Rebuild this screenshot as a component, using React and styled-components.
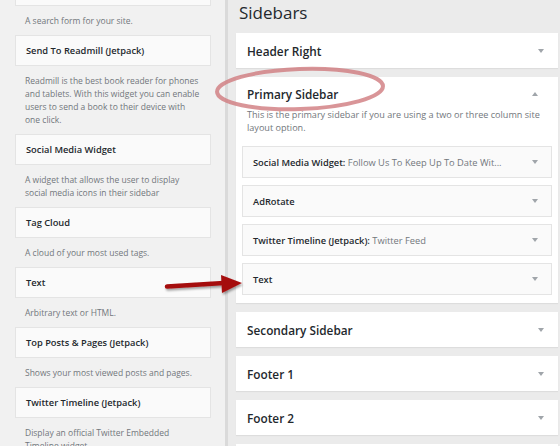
import styled, { createGlobalStyle } from "styled-components";

const GlobalStyle = createGlobalStyle`
  html, body {
    margin: 0;
    padding: 0;
  }
  body {
    font-family: "Open Sans", "Liberation Sans", sans-serif;
    background: #ebebeb;
  }
`;

const available = [
  { title: "Search", desc: "A search form for your site." },
  {
    title: "Send To Readmill (Jetpack)",
    desc: "Readmill is the best book reader for phones and tablets. With this widget you can enable users to send a book to their device with one click.",
  },
  {
    title: "Social Media Widget",
    desc: "A widget that allows the user to display social media icons in their sidebar",
  },
  { title: "Tag Cloud", desc: "A cloud of your most used tags." },
  { title: "Text", desc: "Arbitrary text or HTML." },
  { title: "Top Posts & Pages (Jetpack)", desc: "Shows your most viewed posts and pages." },
  {
    title: "Twitter Timeline (Jetpack)",
    desc: "Display an official Twitter Embedded Timeline widget.",
  },
];

const placed = [
  { title: "Social Media Widget", sub: "Follow Us To Keep Up To Date Wit..." },
  { title: "AdRotate" },
  { title: "Twitter Timeline (Jetpack)", sub: "Twitter Feed" },
  { title: "Text" },
];

const Page = styled.div`
  position: relative;
  width: 560px;
  height: 446px;
  overflow: hidden;
  display: grid;
  grid-template-columns: 228px 1fr;
`;

const Available = styled.div`
  background: #f1f1f1;
  border-right: 3px solid #dadada;
  padding: 0 14px 0 15px;
  overflow: hidden;
`;

const AvailableList = styled.div`
  margin-top: -25px;
`;

const WidgetCard = styled.div`
  height: 31px;
  box-sizing: border-box;
  background: #fafafa;
  border: 1px solid #e4e4e4;
  display: flex;
  align-items: center;
  padding: 0 10px;
  font-size: 9.3px;
  font-weight: 600;
  color: #23282d;
`;

const WidgetDesc = styled.p`
  margin: 0;
  padding: 8px 10px 8px 10px;
  font-size: 8.5px;
  line-height: 13px;
  color: #72777c;
`;

const Sidebars = styled.div`
  padding: 0 2px 0 8px;
  display: flex;
  flex-direction: column;
  gap: 9px;
`;

const Heading = styled.h1`
  margin: 0 0 -2px 3px;
  height: 26px;
  line-height: 26px;
  font-size: 17px;
  font-weight: 400;
  color: #23282d;
`;

const Area = styled.div`
  background: #fff;
  box-shadow: 0 1px 1px rgba(0, 0, 0, 0.06);
  padding: ${(p) => (p.$open ? "0 6px 8px" : "0")};
`;

const AreaHead = styled.div`
  height: ${(p) => (p.$open ? "34px" : "35px")};
  display: flex;
  align-items: center;
  justify-content: space-between;
  padding: ${(p) => (p.$open ? "0 14px 0 5px" : "0 14px 0 11px")};
  font-size: 11.8px;
  font-weight: 600;
  color: #23282d;
`;

const AreaDesc = styled.p`
  margin: -3px 0 12px 5px;
  font-size: 9.1px;
  line-height: 13px;
  color: #72777c;
`;

const PlacedList = styled.div`
  display: flex;
  flex-direction: column;
  gap: 7px;
`;

const PlacedCard = styled.div`
  height: 32px;
  box-sizing: border-box;
  background: #fafafa;
  border: 1px solid #e4e4e4;
  display: flex;
  align-items: center;
  justify-content: space-between;
  padding: 0 13px 0 10px;
  font-size: 9.3px;
  font-weight: 600;
  color: #23282d;
`;

const Sub = styled.span`
  font-weight: 400;
  color: #72777c;
`;

const Caret = styled.span`
  width: 0;
  height: 0;
  border-left: 3.5px solid transparent;
  border-right: 3.5px solid transparent;
  ${(p) =>
    p.$up
      ? "border-bottom: 4px solid #a0a5aa;"
      : "border-top: 4px solid #a0a5aa;"}
`;

const Overlay = styled.svg`
  position: absolute;
  left: 0;
  top: 0;
  pointer-events: none;
`;

export default function App() {
  return (
    <>
      <GlobalStyle />
      <Page>
        <Available>
          <AvailableList>
            {available.map((w) => (
              <div key={w.title}>
                <WidgetCard>{w.title}</WidgetCard>
                <WidgetDesc>{w.desc}</WidgetDesc>
              </div>
            ))}
          </AvailableList>
        </Available>
        <Sidebars>
          <Heading>Sidebars</Heading>
          <Area>
            <AreaHead>
              Header Right
              <Caret />
            </AreaHead>
          </Area>
          <Area $open>
            <AreaHead $open>
              Primary Sidebar
              <Caret $up />
            </AreaHead>
            <AreaDesc>
              This is the primary sidebar if you are using a two or three column site
              layout option.
            </AreaDesc>
            <PlacedList>
              {placed.map((w) => (
                <PlacedCard key={w.title}>
                  <span>
                    {w.title}
                    {w.sub && (
                      <>
                        : <Sub>{w.sub}</Sub>
                      </>
                    )}
                  </span>
                  <Caret />
                </PlacedCard>
              ))}
            </PlacedList>
          </Area>
          {["Secondary Sidebar", "Footer 1", "Footer 2"].map((t) => (
            <Area key={t}>
              <AreaHead>
                {t}
                <Caret />
              </AreaHead>
            </Area>
          ))}
          <Area>
            <AreaHead />
          </Area>
        </Sidebars>
        <Overlay width="560" height="446" viewBox="0 0 560 446">
          <defs>
            <filter id="sh" x="-20%" y="-50%" width="140%" height="200%">
              <feDropShadow dx="1" dy="2" stdDeviation="1.2" floodColor="#000" floodOpacity="0.35" />
            </filter>
          </defs>
          <ellipse
            cx="300"
            cy="89"
            rx="83"
            ry="20"
            transform="rotate(-2 300 89)"
            fill="none"
            stroke="#cf7b7e"
            strokeOpacity="0.8"
            strokeWidth="4"
          />
          <g filter="url(#sh)">
            <path d="M167 286.5 L224 283" stroke="#a50d0d" strokeWidth="4.5" strokeLinecap="round" />
            <path d="M221 275 L242 283 L222 293 Z" fill="#a50d0d" />
          </g>
        </Overlay>
      </Page>
    </>
  );
}
